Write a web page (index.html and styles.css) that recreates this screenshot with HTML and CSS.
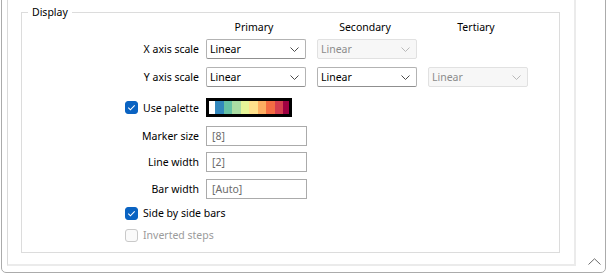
FILE: index.html
```html
<!DOCTYPE html>
<html>
<head>
<meta charset="utf-8">
<link rel="stylesheet" href="styles.css">
</head>
<body>
<div class="frame">
  <div class="panel">
    <fieldset class="group">
      <legend class="legend">Display</legend>
      <div class="row head">
        <div class="lbl"></div>
        <div class="col">Primary</div>
        <div class="col">Secondary</div>
        <div class="col">Tertiary</div>
      </div>
      <div class="row r1">
        <div class="lbl">X axis scale</div>
        <div class="combo"><span>Linear</span><svg class="chev" width="9" height="5" viewBox="0 0 9 5"><polyline points="0.5,0.5 4.5,4.5 8.5,0.5"/></svg></div>
        <div class="combo off"><span>Linear</span><svg class="chev" width="9" height="5" viewBox="0 0 9 5"><polyline points="0.5,0.5 4.5,4.5 8.5,0.5"/></svg></div>
      </div>
      <div class="row r2">
        <div class="lbl">Y axis scale</div>
        <div class="combo"><span>Linear</span><svg class="chev" width="9" height="5" viewBox="0 0 9 5"><polyline points="0.5,0.5 4.5,4.5 8.5,0.5"/></svg></div>
        <div class="combo"><span>Linear</span><svg class="chev" width="9" height="5" viewBox="0 0 9 5"><polyline points="0.5,0.5 4.5,4.5 8.5,0.5"/></svg></div>
        <div class="combo off"><span>Linear</span><svg class="chev" width="9" height="5" viewBox="0 0 9 5"><polyline points="0.5,0.5 4.5,4.5 8.5,0.5"/></svg></div>
      </div>
      <div class="row pal">
        <div class="chk-cell">
          <span class="box on"><svg width="13" height="13" viewBox="0 0 13 13"><polyline points="3.3,6.7 5.4,8.8 9.7,4.4"/></svg></span>
          <span>Use palette</span>
        </div>
        <div class="palette">
          <i class="s s1"></i><i class="s s2"></i><i class="s s3"></i><i class="s s4"></i><i class="s s5"></i><i class="s s6"></i><i class="s s7"></i><i class="s s8"></i><i class="s s9"></i><i class="s s10"></i>
        </div>
      </div>
      <div class="row t1">
        <div class="lbl">Marker size</div>
        <div class="field">[8]</div>
      </div>
      <div class="row t2">
        <div class="lbl">Line width</div>
        <div class="field">[2]</div>
      </div>
      <div class="row t3">
        <div class="lbl">Bar width</div>
        <div class="field">[Auto]</div>
      </div>
      <div class="row c1">
        <div class="chk-cell">
          <span class="box on"><svg width="13" height="13" viewBox="0 0 13 13"><polyline points="3.3,6.7 5.4,8.8 9.7,4.4"/></svg></span>
          <span>Side by side bars</span>
        </div>
      </div>
      <div class="row c2">
        <div class="chk-cell dis">
          <span class="box"></span>
          <span>Inverted steps</span>
        </div>
      </div>
    </fieldset>
  </div>
  <svg class="caret" width="13" height="7" viewBox="0 0 13 7"><polyline points="0.5,6.5 6.5,0.8 12.5,6.5"/></svg>
</div>
</body>
</html>
```
FILE: styles.css
```css
* { box-sizing: border-box; }
body {
  margin: 0;
  background: #fff;
  font-family: "Noto Sans", "Open Sans", sans-serif;
  font-size: 10.5px;
  line-height: 14px;
  color: #000;
}
.frame {
  position: relative;
  margin: -10px 0 0 1px;
  border: 1px solid #ababab;
  border-radius: 0 0 5px 5px;
  padding: 0 29px 6px 5px;
}
.panel {
  border-left: 1px solid #d9d9d9;
  border-right: 2px solid #ebebeb;
  border-bottom: 2px solid #ebebeb;
  padding: 14px 14px 11px 13px;
}
.group {
  margin: 0;
  padding: 0 0 9px 0;
  border: 1px solid #dcdcdc;
  min-width: 0;
}
.legend {
  margin-left: 6px;
  padding: 0 4px;
  line-height: 14px;
}
.row {
  display: flex;
  align-items: center;
  height: 20px;
}
.head { height: 14px; margin-top: 1px; }
.r1 { margin-top: 5px; }
.r2 { margin-top: 8px; }
.pal { margin-top: 11px; height: 19px; }
.t1 { margin-top: 9px; }
.t2 { margin-top: 6px; }
.t3 { margin-top: 7px; }
.c1 { margin-top: 6px; height: 16px; }
.c2 { margin-top: 6px; height: 16px; }
.lbl {
  width: 184px;
  flex: none;
  text-align: right;
  padding-right: 7px;
  white-space: nowrap;
}
.col {
  width: 100px;
  margin-right: 11px;
  text-align: center;
  padding-right: 4px;
  flex: none;
}
.combo {
  width: 100px;
  height: 20px;
  margin-right: 11px;
  flex: none;
  border: 1px solid #b3b3b3;
  border-bottom-color: #8f8f8f;
  border-radius: 2px;
  background: #fff;
  display: flex;
  align-items: center;
  justify-content: space-between;
  padding: 0 6px 0 3px;
}
.combo .chev polyline {
  fill: none;
  stroke: #4a4a4a;
  stroke-width: 1;
}
.combo.off {
  background: #f7f7f7;
  border-color: #e1e1e1;
  color: #8c8c8c;
}
.combo.off .chev polyline { stroke: #b9b9b9; }
.chk-cell {
  width: 184px;
  flex: none;
  display: flex;
  align-items: center;
  padding-left: 103px;
  white-space: nowrap;
}
.box {
  width: 13px;
  height: 13px;
  flex: none;
  margin-right: 5px;
  border: 1px solid #c4c4c4;
  border-radius: 3px;
  background: #f9f9f9;
  display: block;
}
.box svg { display: block; }
.box.on {
  background: #0a63c2;
  border-color: #0a63c2;
}
.box.on svg { margin: -1px; }
.box polyline {
  fill: none;
  stroke: #fff;
  stroke-width: 1.1;
}
.dis { color: #9b9b9b; }
.dis .box { border-color: #c9c9c9; background: #fafafa; }
.palette {
  display: flex;
  width: 86px;
  height: 19px;
  border: 3px solid #000;
  flex: none;
}
.s { display: block; height: 100%; }
.s1 { width: 6px; background: #ffffff; }
.s2 { width: 9px; background: #3288bd; }
.s3 { width: 8px; background: #66c2a5; }
.s4 { width: 9px; background: #abdda4; }
.s5 { width: 8px; background: #e6f598; }
.s6 { width: 9px; background: #fee08b; }
.s7 { width: 8px; background: #fdae61; }
.s8 { width: 9px; background: #f46d43; }
.s9 { width: 8px; background: #d53e4f; }
.s10 { width: 6px; background: #9e0142; }
.field {
  width: 101px;
  height: 20px;
  flex: none;
  border: 1px solid #ababab;
  background: #fff;
  color: #6b6b6b;
  padding-left: 5px;
  display: flex;
  align-items: center;
}
.caret {
  position: absolute;
  right: 4px;
  bottom: 7px;
}
.caret polyline {
  fill: none;
  stroke: #6a6a6a;
  stroke-width: 1;
}
```
